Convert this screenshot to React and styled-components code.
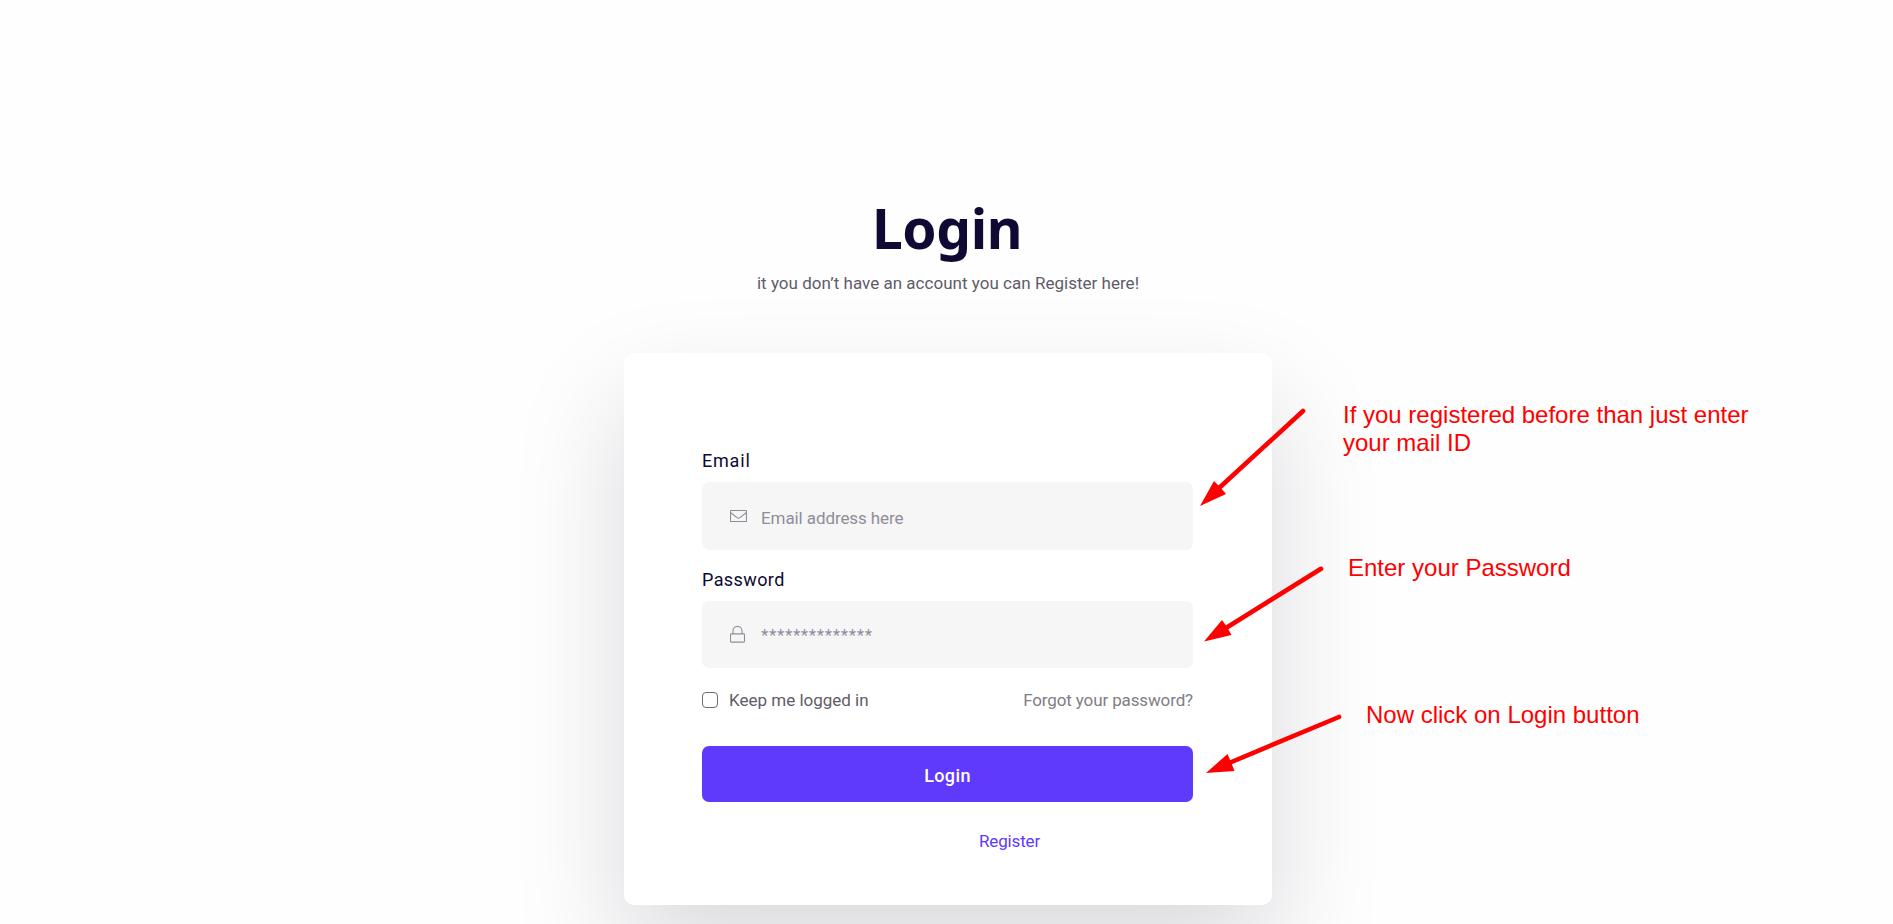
import React from "react";
import styled, { createGlobalStyle } from "styled-components";

const Global = createGlobalStyle`
  *, *::before, *::after { box-sizing: border-box; }
  html, body { margin: 0; background: #fefefe; overflow: hidden; }
  body { font-family: Roboto, "Liberation Sans", sans-serif; }
`;

const Page = styled.main`
  position: relative;
  display: flex;
  flex-direction: column;
  align-items: center;
  height: 924px;
  padding: 190px 0 0 3px;
  overflow: hidden;
`;

const Title = styled.h1`
  margin: 0;
  height: 75px;
  font: 700 55px/75px "Noto Sans", sans-serif;
  letter-spacing: -0.4px;
  padding-right: 2px;
  color: #0e0a33;
`;

const Subtitle = styled.p`
  margin: 3px 0 54px;
  height: 31px;
  font-size: 17px;
  line-height: 31px;
  font-weight: 400;
  letter-spacing: ${(p) => p.$track || "0"};
  color: #5f5c69;
  white-space: nowrap;
`;

const Card = styled.form`
  flex: none;
  display: flex;
  flex-direction: column;
  width: 648px;
  height: 552px;
  padding: 94px 79px 0 78px;
  border-radius: 10px;
  background: #fff;
  box-shadow: 0 50px 112px rgba(14, 12, 40, 0.15);
`;

const Label = styled.label`
  height: 28px;
  margin: ${(p) => p.$top || "0"} 0 7px;
  font-size: 18px;
  line-height: 28px;
  letter-spacing: ${(p) => p.$track || "0"};
  color: #0e0a33;
`;

const Field = styled.div`
  display: flex;
  align-items: center;
  height: ${(p) => p.$height};
  padding: 0 28px;
  border-radius: 7px;
  background: #f6f6f6;
  color: #908d99;

  svg { flex: none; display: block; width: 17px; height: 18px; }
`;

const Input = styled.input`
  flex: 1;
  min-width: 0;
  height: 30px;
  margin-left: 13px;
  padding: ${(p) => p.$shift || "3px"} 0 0 1px;
  border: 0;
  outline: 0;
  background: transparent;
  font: 400 17px Roboto, sans-serif;
  letter-spacing: ${(p) => p.$track || "0"};

  &::placeholder { color: #908d99; opacity: 1; }
`;

const Options = styled.div`
  display: flex;
  align-items: center;
  justify-content: space-between;
  height: 28px;
  margin-top: 18px;
  font-size: 17px;
`;

const Remember = styled.label`
  display: flex;
  align-items: center;
  gap: 11px;
  color: #5f5c69;
`;

const Checkbox = styled.input`
  appearance: none;
  width: 16px;
  height: 16px;
  margin: 0;
  border: 1px solid #6d6b76;
  border-radius: 4px;
  background: #fff;
`;

const Forgot = styled.a`
  color: #7f7d86;
  letter-spacing: -0.13px;
`;

const Submit = styled.button`
  height: 56px;
  margin-top: 32px;
  padding: 3px 0 0;
  border: 0;
  border-radius: 7px;
  background: #5f3afc;
  color: #fff;
  font: 500 18px Roboto, sans-serif;
  letter-spacing: 0.4px;
`;

const Register = styled.a`
  margin: 27px 0 0 277px;
  height: 24px;
  font-size: 17px;
  line-height: 24px;
  letter-spacing: -0.15px;
  color: #5f3afc;
`;

const Arrows = styled.svg`
  position: absolute;
  inset: 0;
  width: 1893px;
  height: 924px;
  pointer-events: none;
`;

const Note = styled.p`
  position: absolute;
  left: ${(p) => p.$x}px;
  top: ${(p) => p.$y}px;
  margin: 0;
  font: 24px/28px "Liberation Sans", Arial, sans-serif;
  color: #f00;
  white-space: nowrap;
`;

const MailIcon = () => (
  <svg viewBox="0 0 17 18" fill="none" stroke="currentColor" strokeWidth="1.1">
    <rect x="0.5" y="3.5" width="16" height="11" rx="0.8" />
    <path d="M.8 5.8 7 10.6q1.5 1 3 0l6.2-4.8" />
  </svg>
);

const LockIcon = () => (
  <svg viewBox="0 0 17 18" fill="none" stroke="currentColor" strokeWidth="1.1">
    <rect x="0.5" y="7.9" width="14" height="8.2" rx="0.8" />
    <path d="M3 7.9V4.9a4.5 4.5 0 0 1 9 0v3" />
  </svg>
);

const arrows = [
  { tail: "1303 411", neck: "1218 489", head: "1200,506 1214,481 1220,487 1226,494" },
  { tail: "1321 568.8", neck: "1226 628", head: "1204,641.5 1222,620 1227,627 1231.5,635" },
  { tail: "1339 717", neck: "1229 763", head: "1206,773 1227.5,754 1231,762 1234.5,771" },
];

export default function App() {
  return (
    <>
      <Global />
      <Page>
        <Title>Login</Title>
        <Subtitle $track="0.02px">it you don’t have an account you can Register here!</Subtitle>
        <Card onSubmit={(e) => e.preventDefault()}>
          <Label htmlFor="email" $track="0.8px">Email</Label>
          <Field $height="68px">
            <MailIcon />
            <Input id="email" type="email" placeholder="Email address here" $track="-0.09px" />
          </Field>
          <Label htmlFor="password" $top="16px" $track="0.4px">Password</Label>
          <Field $height="67px">
            <LockIcon />
            <Input id="password" type="password" placeholder="**************" $track="0.65px" $shift="1px" />
          </Field>
          <Options>
            <Remember>
              <Checkbox type="checkbox" />
              Keep me logged in
            </Remember>
            <Forgot>Forgot your password?</Forgot>
          </Options>
          <Submit>Login</Submit>
          <Register>Register</Register>
        </Card>
        <Arrows viewBox="0 0 1893 924" fill="#f00" stroke="#f00">
          {arrows.map((a) => (
            <g key={a.tail}>
              <path d={`M${a.tail}L${a.neck}`} strokeWidth="4.6" strokeLinecap="round" />
              <polygon points={a.head} stroke="none" />
            </g>
          ))}
        </Arrows>
        <Note $x={1343} $y={401}>
          If you registered before than just enter
          <br />
          your mail ID
        </Note>
        <Note $x={1348} $y={554}>Enter your Password</Note>
        <Note $x={1366} $y={701}>Now click on Login button</Note>
      </Page>
    </>
  );
}
